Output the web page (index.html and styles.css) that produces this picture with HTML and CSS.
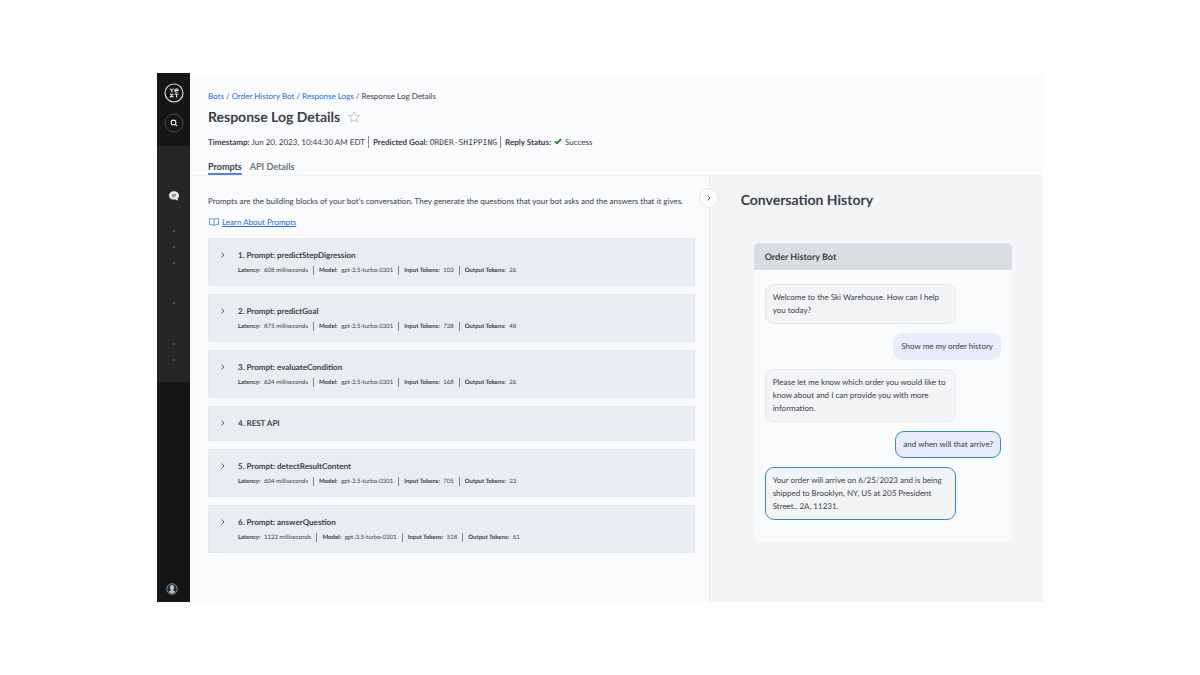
FILE: index.html
```html
<!DOCTYPE html>
<html lang="en">
<head>
    <meta charset="UTF-8">
    <meta name="viewport" content="width=device-width, initial-scale=1.0">
    <title>Response Log Details</title>
    <link rel="stylesheet" href="styles.css">
</head>
<body>
    <div class="app">
        <nav class="sidebar">
            <div class="sidebar-top">
                <a href="#" class="logo" aria-label="Yext">
                    <svg viewBox="0 0 20 20" width="20" height="20" fill="none" stroke="#e8e8e8">
                        <circle cx="10" cy="10" r="9" stroke-width="1.1"/>
                        <path d="M6 5.500l1.800 2 1.800-2M7.800 7.500v2M6 10.700l3.400 3.700M9.400 10.700L6 14.400M10.500 11.200h4M12.500 11.200v3.400M10.800 7.500h3.400a1.700 1.700 0 1 0-.6 1.400" stroke-width="1.1"/>
                    </svg>
                </a>
                <button type="button" class="search" aria-label="Search">
                    <svg viewBox="0 0 20 20" width="20" height="20" fill="none">
                        <circle cx="10" cy="10" r="9" stroke="#4a4a4a"/>
                        <circle cx="9.500" cy="9.500" r="2.400" stroke="#e8e8e8" stroke-width="1.1"/>
                        <path d="M11.200 11.200l2 2" stroke="#e8e8e8" stroke-width="1.2"/>
                    </svg>
                </button>
            </div>
            <div class="sidebar-menu">
                <a href="#" class="chat-link" aria-label="Bots">
                    <svg viewBox="0 0 12 12" width="12" height="12">
                        <path d="M6 1.200c2.900 0 5 1.800 5 4.200 0 1.400-.6 2.500-1.500 3.200l.7 2.200-2.600-1.400c-.5.1-1 .2-1.600.2-2.900 0-5-1.800-5-4.200s2.100-4.200 5-4.200z" fill="#f2f2f2"/>
                        <path d="M3.800 4.300h1M5.400 4.300h2.800M3.800 5.600h2.400M6.900 5.600h1.200M3.800 6.900h3.200" stroke="#444" stroke-width=".7"/>
                    </svg>
                </a>
                <svg class="dots" viewBox="0 0 4 140" width="4" height="140" fill="#505050">
                    <circle cx="2" cy="5" r="1.300"/>
                    <circle cx="2" cy="21" r="1.300"/>
                    <circle cx="2" cy="37" r="1.300"/>
                    <circle cx="2" cy="77" r="1.300"/>
                    <circle cx="2" cy="118" r="1.300"/>
                    <circle cx="2" cy="134" r="1.300"/>
                </svg>
            </div>
            <a href="#" class="account" aria-label="Account">
                <svg viewBox="0 0 12 12" width="12" height="12">
                    <circle cx="6" cy="6" r="5.300" fill="#23292e" stroke="#9aa7b0" stroke-width=".8"/>
                    <path d="M6 2c1.400 0 2.200 1 2.200 2.300 0 1-.4 1.900-1 2.400v.8l2.100 1c-.7 1.200-1.900 1.900-3.300 1.900s-2.600-.7-3.300-1.900l2.100-1v-.8c-.6-.5-1-1.400-1-2.400C3.800 3 4.600 2 6 2z" fill="#b5c3cc"/>
                </svg>
            </a>
        </nav>

        <main class="main">
            <header class="header">
                <div class="breadcrumbs">
                    <a href="#">Bots</a> / <a href="#">Order History Bot</a> / <a href="#">Response Logs</a> / Response Log Details
                </div>
                <div class="title-row">
                    <h1>Response Log Details</h1>
                    <button type="button" class="star" aria-label="Add to favorites">
                        <svg viewBox="0 0 12 12" width="12" height="12" fill="none" stroke="#b4b8bf" stroke-width=".8" stroke-linejoin="round">
                            <path d="M6 .8l1.600 3.400 3.700.5-2.700 2.600.7 3.700L6 9.200 2.700 11l.7-3.700L.7 4.700l3.700-.5z"/>
                        </svg>
                    </button>
                </div>
                <div class="info">
                    <span><b>Timestamp:</b> Jun 20, 2023, 10:44:30 AM EDT</span>
                    <span><b>Predicted Goal:</b> <code>ORDER-SHIPPING</code></span>
                    <span><b>Reply Status:</b>
                        <svg class="check" viewBox="0 0 8 7" width="8" height="7" fill="none" stroke="#12753a" stroke-width="1.700">
                            <path d="M1 3.400l2 2L7 1.200"/>
                        </svg>
                        Success</span>
                </div>
                <div class="tabs">
                    <button type="button" class="tab active">Prompts</button>
                    <button type="button" class="tab">API Details</button>
                </div>
            </header>

            <div class="content">
                <section class="prompts">
                    <p class="description">Prompts are the building blocks of your bot's conversation. They generate the questions that your bot asks and the answers that it gives.</p>
                    <a href="#" class="learn">
                        <svg viewBox="0 0 10 8" width="10" height="8" fill="none" stroke="#3f78e0" stroke-width=".8">
                            <path d="M5 1.500C4 .6 2.500.5 1.200.6H.5v6h.7c1.300 0 2.800.1 3.800.9 1-.8 2.500-.9 3.800-.9h.7v-6h-.7C7.500.5 6 .6 5 1.500zM5 1.500v6"/>
                        </svg>
                        <span>Learn About Prompts</span>
                    </a>
                    <div class="prompt">
                        <button type="button" class="expand" aria-label="Expand prompt 1"><svg viewBox="0 0 6 8" width="6" height="8"><path d="M1.500 1.500L4 4 1.500 6.500"/></svg></button>
                        <div>
                            <h3>1. Prompt: predictStepDigression</h3>
                            <div class="meta"><span><b>Latency:</b> 608 milliseconds</span><span><b>Model:</b> gpt-3.5-turbo-0301</span><span><b>Input Tokens:</b> 103</span><span><b>Output Tokens:</b> 26</span></div>
                        </div>
                    </div>
                    <div class="prompt">
                        <button type="button" class="expand" aria-label="Expand prompt 2"><svg viewBox="0 0 6 8" width="6" height="8"><path d="M1.500 1.500L4 4 1.500 6.500"/></svg></button>
                        <div>
                            <h3>2. Prompt: predictGoal</h3>
                            <div class="meta"><span><b>Latency:</b> 875 milliseconds</span><span><b>Model:</b> gpt-3.5-turbo-0301</span><span><b>Input Tokens:</b> 738</span><span><b>Output Tokens:</b> 48</span></div>
                        </div>
                    </div>
                    <div class="prompt">
                        <button type="button" class="expand" aria-label="Expand prompt 3"><svg viewBox="0 0 6 8" width="6" height="8"><path d="M1.500 1.500L4 4 1.500 6.500"/></svg></button>
                        <div>
                            <h3>3. Prompt: evaluateCondition</h3>
                            <div class="meta"><span><b>Latency:</b> 624 milliseconds</span><span><b>Model:</b> gpt-3.5-turbo-0301</span><span><b>Input Tokens:</b> 168</span><span><b>Output Tokens:</b> 26</span></div>
                        </div>
                    </div>
                    <div class="prompt">
                        <button type="button" class="expand" aria-label="Expand step 4"><svg viewBox="0 0 6 8" width="6" height="8"><path d="M1.500 1.500L4 4 1.500 6.500"/></svg></button>
                        <div>
                            <h3>4. REST API</h3>
                        </div>
                    </div>
                    <div class="prompt">
                        <button type="button" class="expand" aria-label="Expand prompt 5"><svg viewBox="0 0 6 8" width="6" height="8"><path d="M1.500 1.500L4 4 1.500 6.500"/></svg></button>
                        <div>
                            <h3>5. Prompt: detectResultContent</h3>
                            <div class="meta"><span><b>Latency:</b> 604 milliseconds</span><span><b>Model:</b> gpt-3.5-turbo-0301</span><span><b>Input Tokens:</b> 705</span><span><b>Output Tokens:</b> 23</span></div>
                        </div>
                    </div>
                    <div class="prompt">
                        <button type="button" class="expand" aria-label="Expand prompt 6"><svg viewBox="0 0 6 8" width="6" height="8"><path d="M1.500 1.500L4 4 1.500 6.500"/></svg></button>
                        <div>
                            <h3>6. Prompt: answerQuestion</h3>
                            <div class="meta"><span><b>Latency:</b> 1123 milliseconds</span><span><b>Model:</b> gpt-3.5-turbo-0301</span><span><b>Input Tokens:</b> 518</span><span><b>Output Tokens:</b> 61</span></div>
                        </div>
                    </div>
                </section>

                <aside class="history">
                    <button type="button" class="collapse" aria-label="Collapse conversation history"><svg viewBox="0 0 6 8" width="6" height="8"><path d="M1.500 1.500L4 4 1.500 6.500"/></svg></button>
                    <h2>Conversation History</h2>
                    <div class="chat">
                        <div class="chat-header">Order History Bot</div>
                        <div class="chat-body">
                            <div class="message">Welcome to the Ski Warehouse. How can I help you today?</div>
                            <div class="message user">Show me my order history</div>
                            <div class="message">Please let me know which order you would like to know about and I can provide you with more information.</div>
                            <div class="message user selected">and when will that arrive?</div>
                            <div class="message selected">Your order will arrive on 6/25/2023 and is being shipped to Brooklyn, NY, US at 205 President Street., 2A, 11231.</div>
                        </div>
                    </div>
                </aside>
            </div>
        </main>
    </div>
</body>
</html>
```
FILE: styles.css
```css
* {
    box-sizing: border-box;
}
body {
    font-family: Lato, sans-serif;
    font-size: 8px;
    color: #3b404b;
    background-color: #fff;
    margin: 0;
    text-rendering: geometricPrecision;
}
h1, h2, h3, p {
    margin: 0;
}
button {
    font-family: inherit;
    padding: 0;
    border: none;
    background: none;
    cursor: pointer;
}
a {
    color: #2568e8;
    text-decoration: none;
}
svg {
    display: block;
}
.app {
    display: flex;
    min-height: 100vh;
    padding: 73px 157px;
}
.sidebar {
    display: flex;
    flex-direction: column;
    width: 33px;
    background-color: #161616;
}
.sidebar-top {
    display: flex;
    flex-direction: column;
    align-items: center;
    gap: 10px;
    padding: 10px 0 13px;
}
.sidebar-menu {
    display: flex;
    flex-direction: column;
    align-items: center;
    gap: 24px;
    padding: 44px 0 16px;
    background-color: #262626;
}
.account {
    margin: auto auto 7px 9px;
}
.main {
    display: flex;
    flex-direction: column;
    flex: 1;
    margin-top: 3px;
    background-color: #fafbfd;
}
.header {
    padding: 14px 18px 0;
    border-bottom: 1px solid #f1f2f5;
}
.breadcrumbs {
    line-height: 12px;
}
.title-row {
    display: flex;
    align-items: center;
    gap: 8px;
    margin-top: 5px;
}
h1, h2 {
    font-size: 14px;
    line-height: 20px;
}
.info {
    display: flex;
    align-items: center;
    margin-top: 9px;
    line-height: 12px;
}
.info span + span {
    padding-left: 4px;
    margin-left: 3px;
    border-left: 1px solid #8c9099;
}
.info code {
    font-family: "DejaVu Sans Mono", monospace;
    font-size: 8px;
    line-height: 8px;
}
.check {
    display: inline-block;
    margin: 0 1px;
}
.tabs {
    display: flex;
    gap: 8px;
    margin-top: 13px;
}
.tab {
    height: 14px;
    font-size: 9px;
    font-weight: bold;
    line-height: 12px;
    color: #6d717a;
    border-bottom: 2px solid transparent;
}
.tab.active {
    color: #3b404b;
    border-color: #4a86e8;
}
.content {
    display: flex;
    flex: 1;
}
.prompts {
    flex: 1;
    padding: 19px 14px 16px 18px;
}
.description {
    line-height: 12px;
}
.learn {
    display: flex;
    align-items: center;
    gap: 3px;
    margin: 9px 0 10px 1px;
    line-height: 12px;
    text-decoration: underline;
}
.prompt {
    display: flex;
    gap: 12px;
    min-height: 35px;
    padding: 10px 11px;
    margin-bottom: 8px;
    background-color: #e9ecf0;
    border: 1px solid #e4e7eb;
}
.expand {
    height: 12px;
}
.expand svg, .collapse svg {
    fill: none;
    stroke: #5a5f69;
    stroke-width: 1;
}
h3 {
    font-size: 8px;
    line-height: 12px;
}
.meta {
    display: flex;
    margin-top: 5px;
    font-size: 6px;
    line-height: 9px;
}
.meta b {
    margin-right: 2px;
}
.meta span + span {
    padding-left: 5px;
    margin-left: 5px;
    border-left: 1px solid #7f848d;
}
.history {
    position: relative;
    width: 39.2%;
    padding: 14px 31px 16px;
    background-color: #f3f4f6;
    border-left: 1px solid #e9ebee;
}
.collapse {
    position: absolute;
    top: 12px;
    left: -11px;
    display: flex;
    align-items: center;
    justify-content: center;
    width: 20px;
    height: 20px;
    background-color: #fcfcfe;
    border: 1px solid #e4e6ea;
    border-radius: 50%;
}
.chat {
    margin: 33px 0 0 13px;
    background-color: #fafbfd;
    border-radius: 5px;
    overflow: hidden;
}
.chat-header {
    padding: 7px 11px;
    font-size: 9px;
    font-weight: bold;
    line-height: 13px;
    background-color: #d9dce1;
}
.chat-body {
    display: flex;
    flex-direction: column;
    gap: 9px;
    padding: 14px 11px 22px;
}
.message {
    align-self: flex-start;
    max-width: 81%;
    padding: 6px 7px;
    font-size: 8px;
    line-height: 13px;
    background-color: #f3f4f6;
    border: 1px solid #e6e8eb;
    border-radius: 9px;
}
.message.user {
    align-self: flex-end;
    background-color: #e8edf9;
    border-color: #e8edf9;
}
.message.selected {
    border-color: #2e8bc8;
}
```
